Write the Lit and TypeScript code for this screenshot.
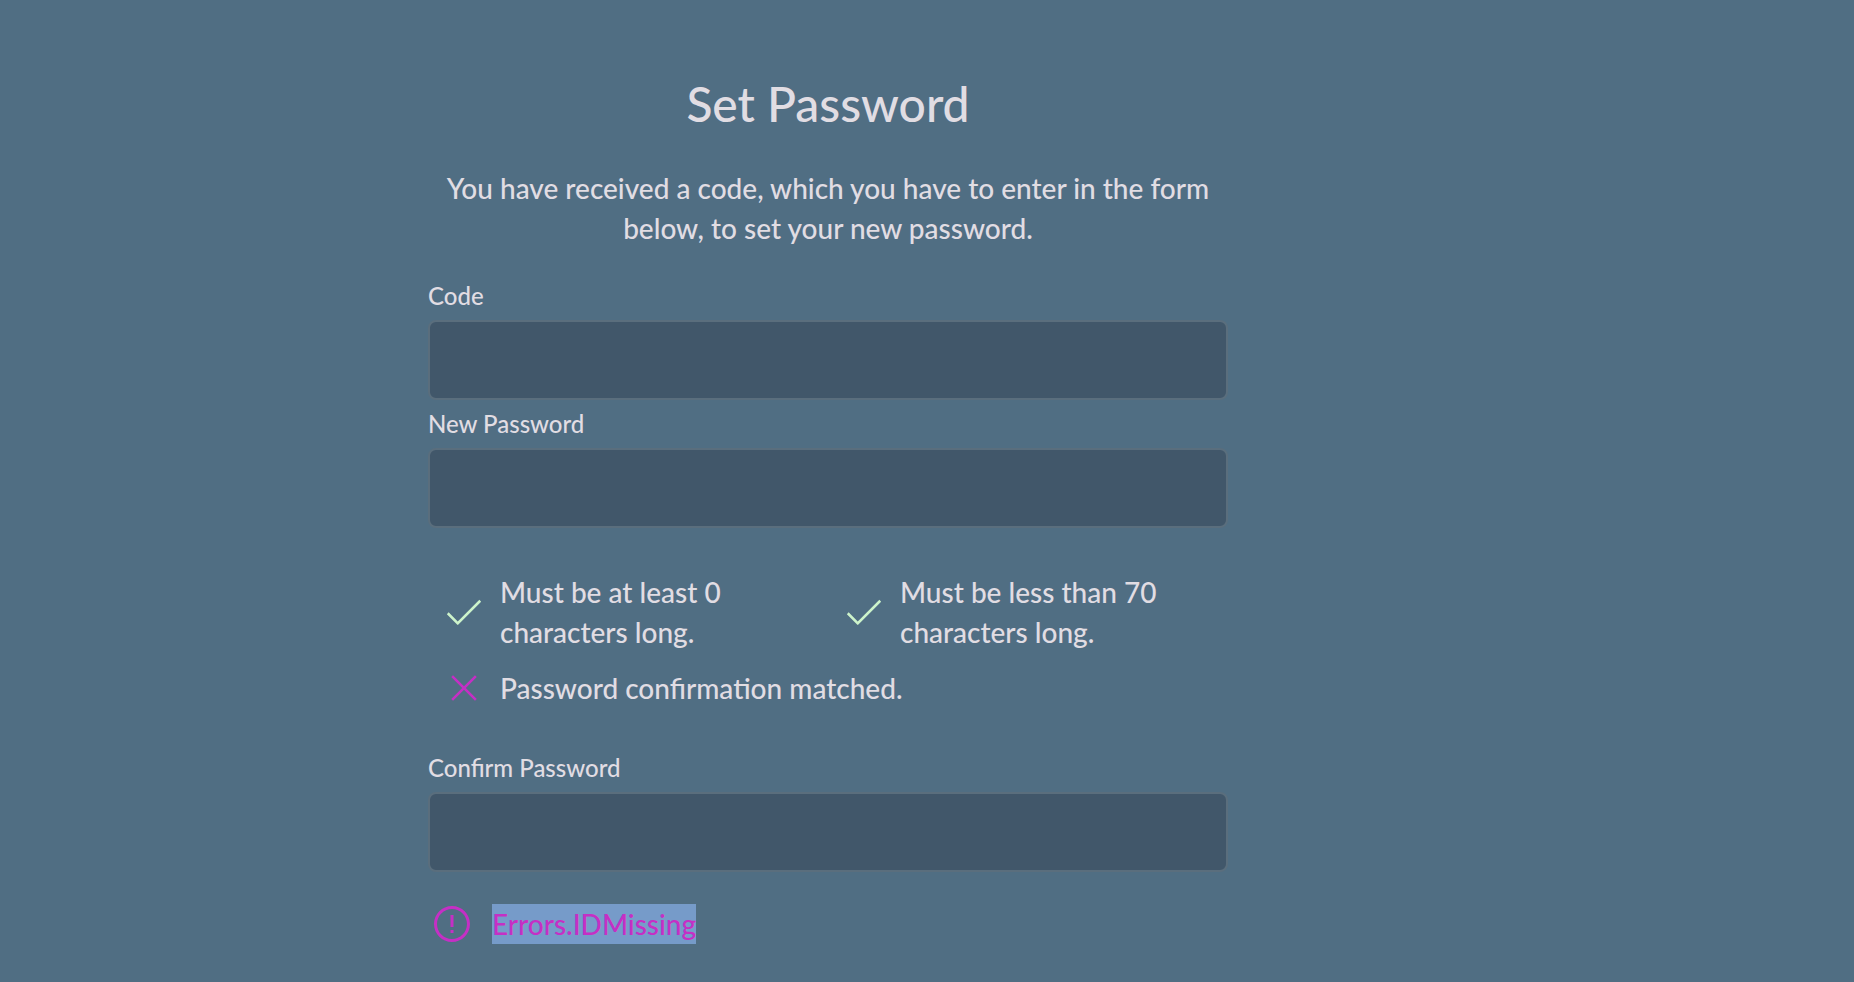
import { LitElement, html, css, svg } from "lit";
import { customElement, property } from "lit/decorators.js";

const ICONS = {
  check:
    "M28.28125 6.28125L11 23.5625L3.71875 16.28125L2.28125 17.71875L10.28125 25.71875L11 26.40625L11.71875 25.71875L29.71875 7.71875Z",
  times:
    "M7.21875 5.78125L5.78125 7.21875L14.5625 16L5.78125 24.78125L7.21875 26.21875L16 17.4375L24.78125 26.21875L26.21875 24.78125L17.4375 16L26.21875 7.21875L24.78125 5.78125L16 14.5625Z",
  alert:
    "M16 4C9.383 4 4 9.383 4 16S9.383 28 16 28S28 22.617 28 16S22.617 4 16 4ZM16 6C21.535 6 26 10.465 26 16S21.535 26 16 26S6 21.535 6 16S10.465 6 16 6ZM15 10V18H17V10ZM15 20V22H17V20Z",
};

@customElement("line-icon")
class LineIcon extends LitElement {
  @property() name: keyof typeof ICONS = "check";

  static styles = css`
    :host {
      display: block;
      flex: none;
      width: 40px;
      height: 40px;
    }
    .glyph {
      display: block;
      width: 100%;
      height: 100%;
      fill: currentColor;
    }
  `;

  render() {
    return html`<svg class="glyph" viewBox="0 0 32 32" aria-hidden="true">
      ${svg`<path fill-rule="evenodd" d=${ICONS[this.name]}></path>`}
    </svg>`;
  }
}

@customElement("app-root")
class AppRoot extends LitElement {
  static styles = css`
    :host {
      display: block;
      box-sizing: border-box;
      min-height: 100vh;
      padding: 72px 214px 16px 16px;
      background: #506e83;
      color: #e1dde3;
      font: 500 28px/40px Lato, "Open Sans", sans-serif;
    }
    .form {
      display: flex;
      flex-direction: column;
      max-width: 800px;
      margin: 0 auto;
    }
    .title {
      margin: 0 0 32px;
      font-size: 48px;
      font-weight: 500;
      line-height: 64px;
      text-align: center;
    }
    .intro {
      margin: 0 0 32px;
      padding: 0 16px;
      text-align: center;
    }
    .field {
      display: flex;
      flex-direction: column;
      gap: 8px;
    }
    .field + .field {
      margin-top: 8px;
    }
    .label {
      font-size: 24px;
      line-height: 32px;
    }
    .input {
      box-sizing: border-box;
      width: 100%;
      height: 80px;
      padding: 0 20px;
      border: 2px solid #5a6e7d;
      border-radius: 8px;
      outline: none;
      background: #41576a;
      color: inherit;
      font: inherit;
    }
    .input:focus {
      border-color: #769bc9;
    }
    .rules {
      display: grid;
      grid-template-columns: 1fr 1fr;
      gap: 16px 0;
      margin: 44px 0;
      padding: 0;
      list-style: none;
    }
    .rule {
      display: flex;
      align-items: center;
      gap: 16px;
      padding: 0 16px;
    }
    .wide {
      grid-column: 1 / -1;
    }
    .ok {
      color: #cdf4cb;
    }
    .bad,
    .error {
      color: #c52fc5;
    }
    .error {
      display: flex;
      align-items: center;
      gap: 16px;
      margin-top: 28px;
    }
    .alert {
      width: 48px;
      height: 48px;
    }
    .selected {
      display: block;
      background: #769bc9;
      color: inherit;
    }
  `;

  private field(id: string, label: string, type: string) {
    return html`<div class="field">
      <label class="label" for=${id}>${label}</label>
      <input class="input" id=${id} name=${id} type=${type} autocomplete="off" />
    </div>`;
  }

  private rule(text: string, valid: boolean, wide = false) {
    return html`<li class="rule ${wide ? "wide" : ""}">
      <line-icon class=${valid ? "ok" : "bad"} name=${valid ? "check" : "times"}></line-icon>
      <span>${text}</span>
    </li>`;
  }

  render() {
    return html`<form class="form">
      <h1 class="title">Set Password</h1>
      <p class="intro">
        You have received a code, which you have to enter in the form below, to set your new
        password.
      </p>
      ${this.field("code", "Code", "text")}
      ${this.field("new-password", "New Password", "password")}
      <ul class="rules">
        ${this.rule("Must be at least 0 characters long.", true)}
        ${this.rule("Must be less than 70 characters long.", true)}
        ${this.rule("Password confirmation matched.", false, true)}
      </ul>
      ${this.field("confirm-password", "Confirm Password", "password")}
      <div class="error" role="alert">
        <line-icon class="alert" name="alert"></line-icon>
        <mark class="selected">Errors.IDMissing</mark>
      </div>
    </form>`;
  }
}
